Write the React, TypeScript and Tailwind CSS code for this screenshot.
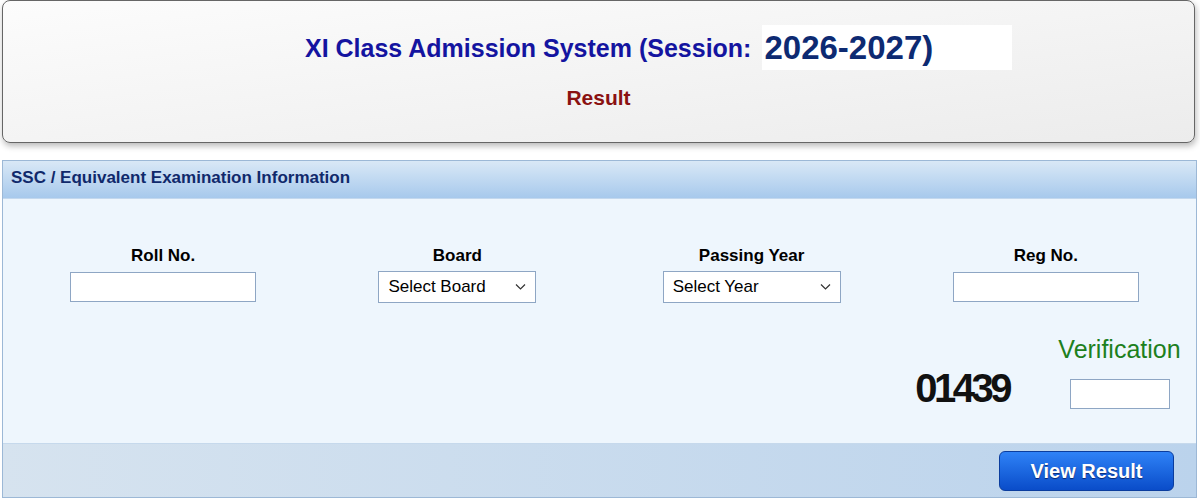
import { ChangeEvent, useState } from "react";

const font = "font-['Liberation_Sans',Arial,Helvetica,sans-serif]";

function Chevron() {
  return (
    <svg
      className="pointer-events-none absolute right-[10px] top-1/2 -translate-y-1/2"
      width="11"
      height="7"
      viewBox="0 0 11 7"
      fill="none"
      aria-hidden="true"
    >
      <path d="M1 1l4.5 4.5L10 1" stroke="#333" strokeWidth="1.2" />
    </svg>
  );
}

function SelectBox({
  width,
  placeholder,
  options,
}: {
  width: string;
  placeholder: string;
  options: string[];
}) {
  const [value, setValue] = useState("");
  return (
    <div className={`relative ${width}`}>
      <select
        value={value}
        onChange={(e: ChangeEvent<HTMLSelectElement>) => setValue(e.target.value)}
        className="h-[32px] w-full appearance-none border border-[#8ea6c4] bg-white pl-[9px] pr-[24px] text-[17px] text-black outline-none"
      >
        <option value="">{placeholder}</option>
        {options.map((o) => (
          <option key={o} value={o}>
            {o}
          </option>
        ))}
      </select>
      <Chevron />
    </div>
  );
}

function Field({ label, children }: { label: string; children: React.ReactNode }) {
  return (
    <div className="flex flex-col items-center">
      <div className="h-[22px] text-[17px] font-bold leading-[22px] text-black">{label}</div>
      <div className="mt-[4px] flex h-[32px] items-center">{children}</div>
    </div>
  );
}

export default function App() {
  return (
    <div className={`h-[502px] w-[1200px] overflow-hidden bg-white ${font}`}>
      {/* page header */}
      <div className="mx-[2px] mr-[5px] h-[143px] rounded-[8px] border border-[#666] bg-gradient-to-br from-[#fcfcfc] to-[#ececec] shadow-[1px_3px_6px_rgba(0,0,0,0.28)]">
        <div className="flex items-center pl-[302px] pt-[24px]">
          <span className="text-[25px] font-bold leading-[30px] text-[#1414a0]">
            XI Class Admission System (Session:
          </span>
          <span className="ml-[11px] flex h-[45px] w-[250px] items-center bg-white pl-[2px] text-[33px] font-bold leading-[40px] text-[#0d2a72]">
            2026-2027)
          </span>
        </div>
        <div className="mt-[16px] text-center text-[21px] font-bold leading-[24px] text-[#8a1111]">
          Result
        </div>
      </div>

      {/* form panel */}
      <section className="mx-[2px] mr-[3px] mt-[17px] border border-[#9cb8d6]">
        <div className="flex h-[37px] items-center bg-gradient-to-b from-[#d9e8f6] to-[#a7c9ec] pb-[4px] pl-[8px] text-[17px] font-bold text-[#10296b]">
          SSC / Equivalent Examination Information
        </div>

        <div className="h-[245px] border-t border-[#c3d8ee] bg-[#eef6fd] pt-[46px]">
          <div className="grid grid-cols-4 pl-[13px] pr-[3px]">
            <Field label="Roll No.">
              <input className="h-[30px] w-[186px] border border-[#8ea6c4] bg-white px-2 text-[16px] outline-none" />
            </Field>
            <Field label="Board">
              <SelectBox
                width="w-[158px]"
                placeholder="Select Board"
                options={["Dhaka", "Rajshahi", "Comilla", "Jessore", "Chittagong", "Barisal", "Sylhet", "Dinajpur", "Mymensingh", "Madrasah", "Technical"]}
              />
            </Field>
            <Field label="Passing Year">
              <SelectBox width="w-[178px]" placeholder="Select Year" options={["2026", "2025", "2024"]} />
            </Field>
            <Field label="Reg No.">
              <input className="h-[30px] w-[186px] border border-[#8ea6c4] bg-white px-2 text-[16px] outline-none" />
            </Field>
          </div>

          <div className="mt-[32px] flex items-end justify-end pr-[14px]">
            <div className="mb-[1px] text-[40px] font-bold leading-[40px] tracking-[-3.5px] text-[#111]">
              01439
            </div>
            <div className="ml-[48px] flex w-[125px] flex-col items-center">
              <div className="text-[25px] leading-[28px] text-[#1d801d]">Verification</div>
              <input className="mt-[16px] h-[30px] w-[100px] border border-[#8ea6c4] bg-white px-1 text-[16px] outline-none" />
            </div>
          </div>
        </div>

        <div className="flex h-[54px] justify-end border-t border-[#c6d9ec] bg-gradient-to-r from-[#d6e3ef] to-[#bbd3ec] pr-[22px] pt-[7px]">
          <button
            type="button"
            className="h-[40px] w-[175px] rounded-[6px] border border-[#0b3d9e] bg-gradient-to-b from-[#2f82f7] to-[#0a4cc9] text-[20px] font-bold text-white [text-shadow:0_1px_1px_rgba(0,0,40,0.6)]"
          >
            View Result
          </button>
        </div>
      </section>
    </div>
  );
}
